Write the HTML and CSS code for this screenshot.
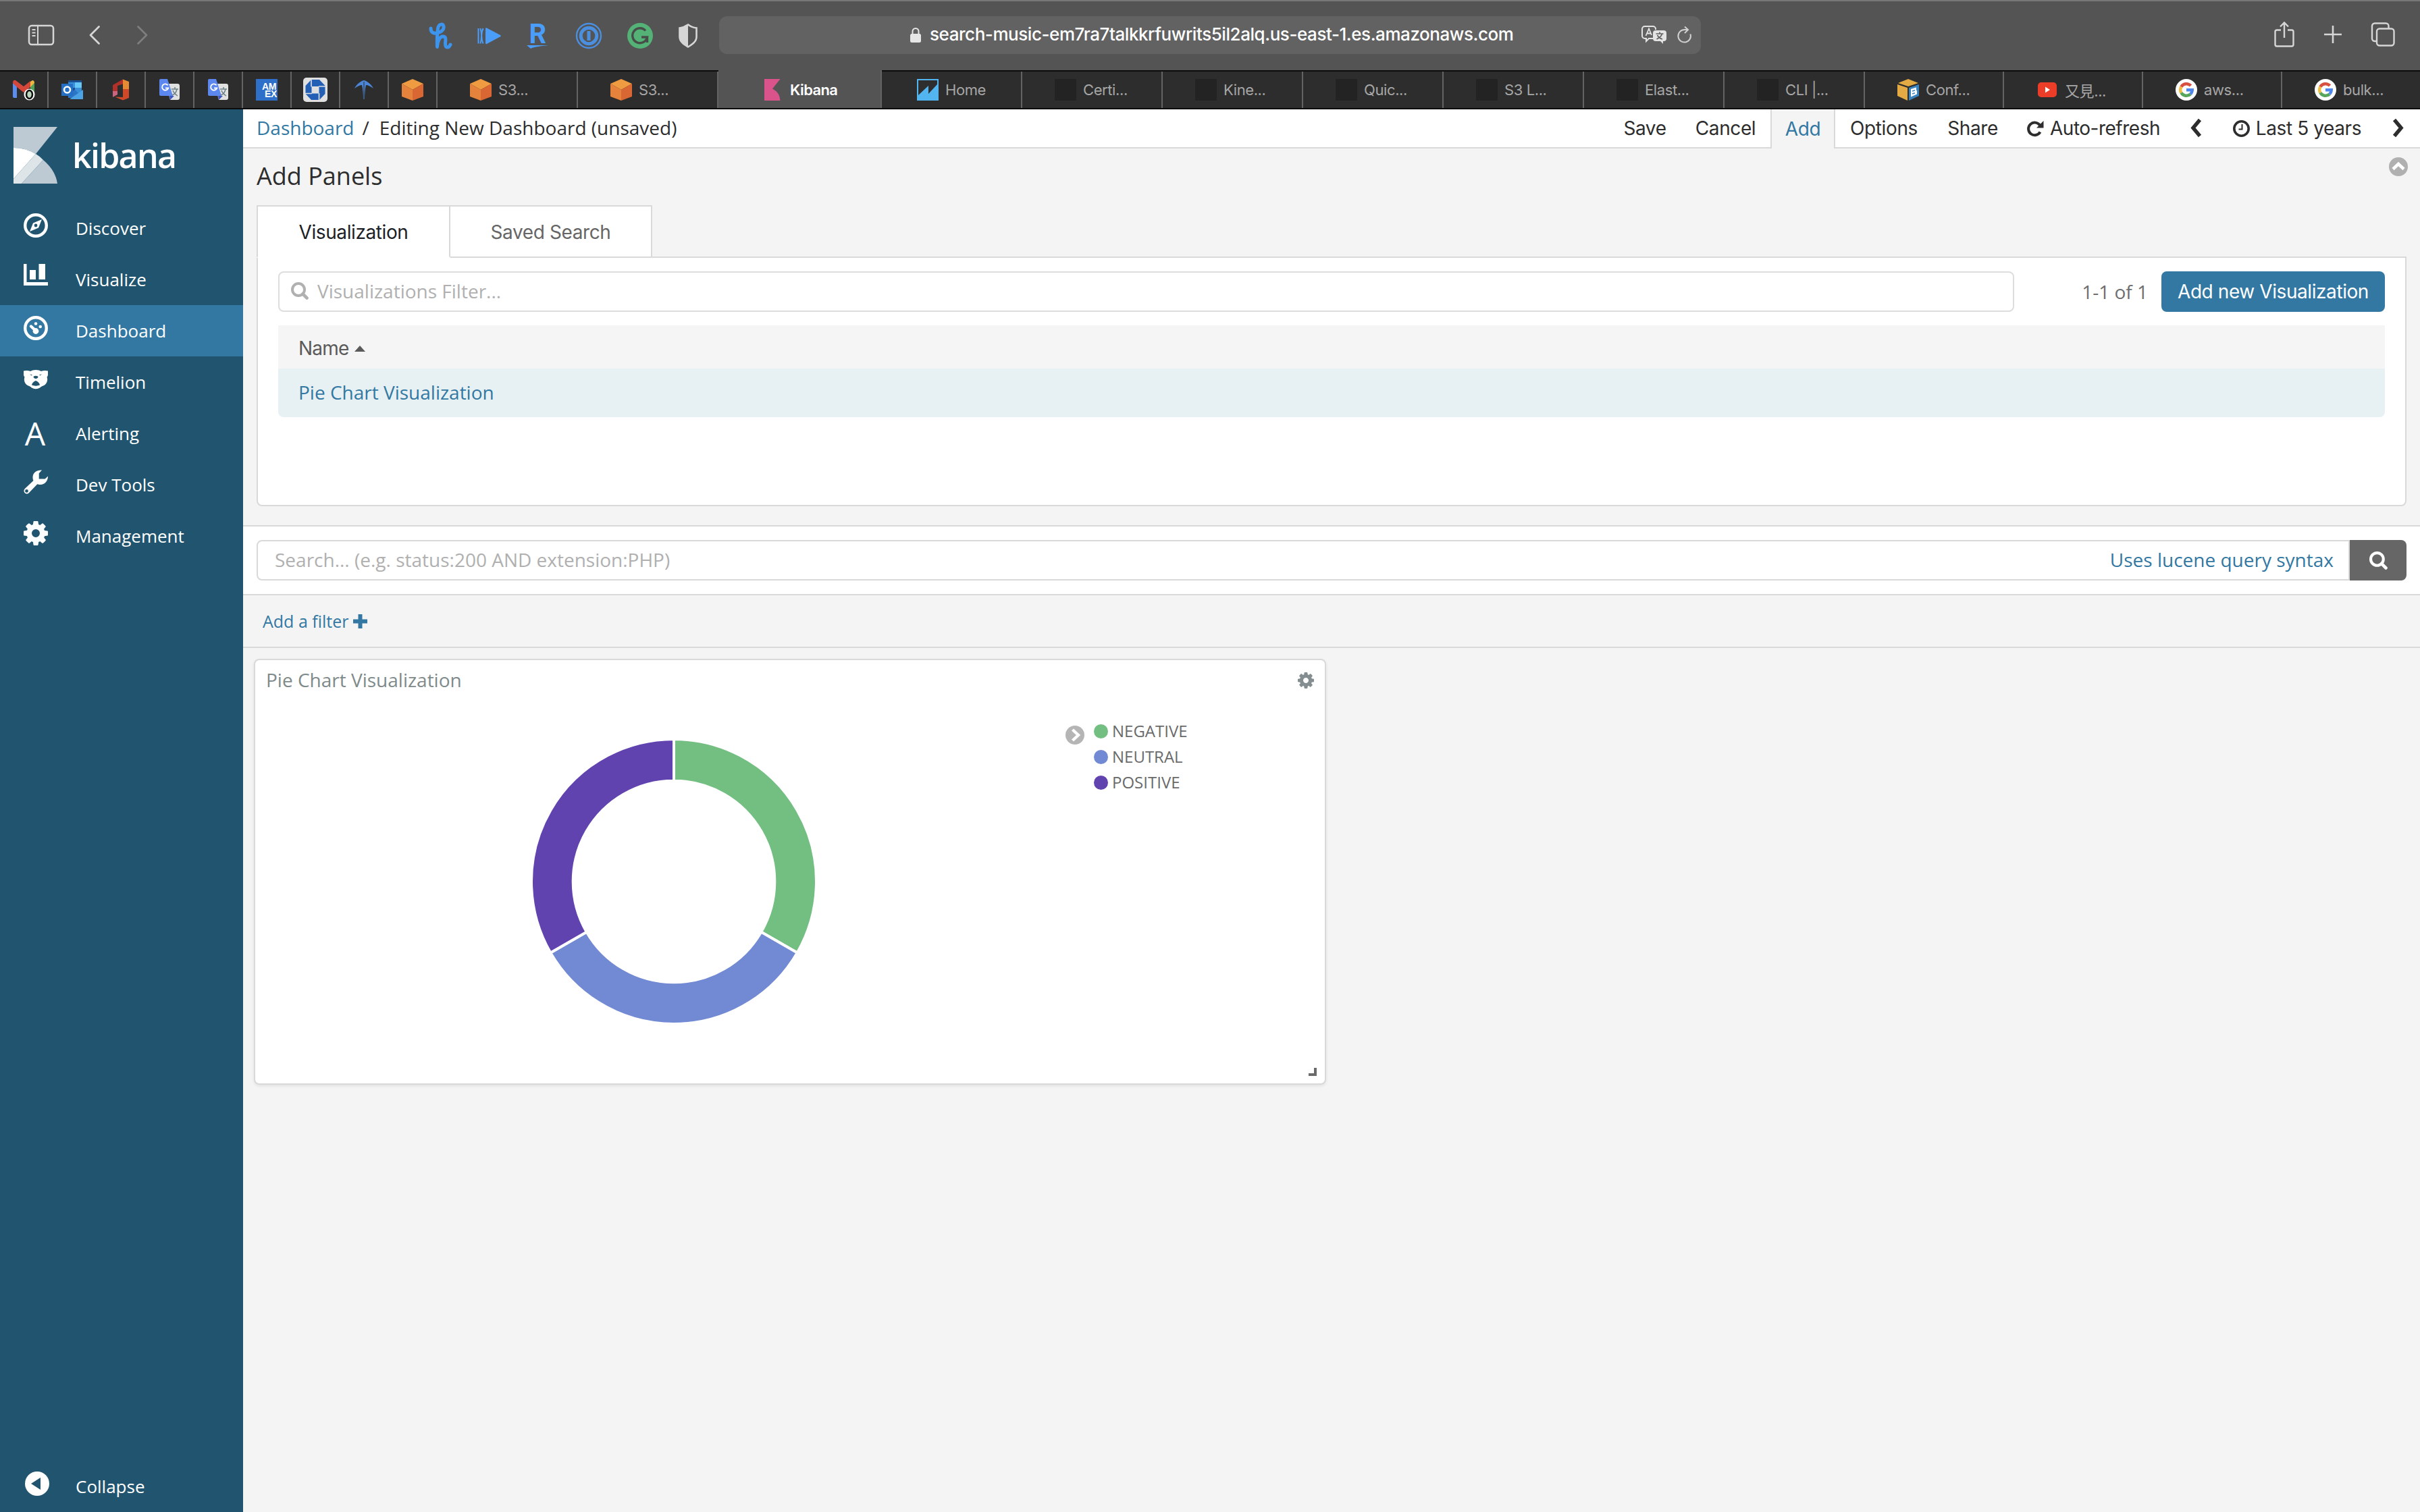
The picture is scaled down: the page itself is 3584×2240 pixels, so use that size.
FILE: index.html
```html
<!DOCTYPE html>
<html lang="en">
<head>
<meta charset="utf-8">
<title>Kibana</title>
<link rel="stylesheet" href="styles.css">
</head>
<body>
<svg class="defs" width="0" height="0">
  <symbol id="cube" viewBox="0 0 32 32"><path fill="#ee9b42" d="M16 0l16 7-16 9L0 7z"/><path fill="#e5833c" d="M0 7l16 9v16L0 26z"/><path fill="#d96733" d="M32 7l-16 9v16l16-6z"/></symbol>
  <symbol id="blank" viewBox="0 0 32 32"><path fill="#232323" d="M0 0h32v32H0z"/></symbol>
  <symbol id="translate" viewBox="0 0 32 32"><path fill="#e1e1e1" d="M11 7h17a3 3 0 013 3v18a3 3 0 01-3 3H17z"/><path fill="#3a56c5" d="M16 25h7l-6 6z"/><path fill="#5b87ee" d="M3 0h10l8 25H3a2 2 0 01-2-2V2a2 2 0 012-2z"/><path d="M13.600 9.300a4.700 4.700 0 10.700 4.200H10" fill="none" stroke="#fff" stroke-width="1.900"/><path d="M19 15h10M24 12v3M27 15c-1 5-4 8-7 9M21 17c1 3 4 6 7 8" fill="none" stroke="#6d8288" stroke-width="1.500"/></symbol>
  <symbol id="google" viewBox="0 0 32 32"><circle cx="16" cy="16" r="16" fill="#fff"/><g fill="none" stroke-width="4.500"><path stroke="#d8503f" d="M8.400 11.600A8.800 8.800 0 0122.500 10"/><path stroke="#f2bd42" d="M8.400 20.400a8.800 8.800 0 010-8.800"/><path stroke="#58a55c" d="M22 22.500a8.800 8.800 0 01-13.600-2.100"/><path stroke="#4f86ec" d="M16 16.300h8.700a8.800 8.800 0 01-2.700 6.200"/></g></symbol>
  <symbol id="gear" viewBox="128 128 1536 1536"><path d="M1152 896q0-106-75-181t-181-75-181 75-75 181 75 181 181 75 181-75 75-181zm512-109v222q0 12-8 23t-20 13l-185 28q-19 54-39 91 35 50 107 138 10 12 10 25t-9 23q-27 37-99 108t-94 71q-12 0-26-9l-138-108q-44 23-91 38-16 136-29 186-7 28-36 28h-222q-14 0-24.500-8.500t-11.500-21.500l-28-184q-49-16-90-37l-141 107q-10 9-25 9-14 0-25-11-126-114-165-168-7-10-7-23 0-12 8-23 15-21 51-66.500t54-70.500q-27-50-41-99l-183-27q-13-2-21-12.500t-8-23.500v-222q0-12 8-23t19-13l186-28q14-46 39-92-40-57-107-138-10-12-10-24 0-10 9-23 26-36 98.500-107.500t94.500-71.500q13 0 26 10l138 107q44-23 91-38 16-136 29-186 7-28 36-28h222q14 0 24.500 8.500t11.500 21.500l28 184q49 16 90 37l142-107q9-9 24-9 13 0 25 10 129 119 165 170 7 8 7 22 0 12-8 23-15 21-51 66.500t-54 70.500q26 50 41 98l183 28q13 2 21 12.500t8 23.500z"/></symbol>
  <symbol id="magnifier" viewBox="0 0 26 26"><circle cx="11" cy="11" r="9" fill="none" stroke="currentColor" stroke-width="4"/><path d="M17.500 17.500l6 6" stroke="currentColor" stroke-width="4.600" stroke-linecap="round"/></symbol>
</svg>

<header class="toolbar">
  <div class="tools tools-left">
    <svg width="40" height="32" viewBox="0 0 40 32"><rect x="2" y="2" width="36" height="28" rx="4" fill="none" stroke="#d6d6d6" stroke-width="2.500"/><path d="M15 2v28" stroke="#d6d6d6" stroke-width="2"/><path d="M6.500 8h5M6.500 12.500h5M6.500 17h5" stroke="#d6d6d6" stroke-width="2"/></svg>
    <svg class="t-back" width="18" height="30" viewBox="0 0 18 30"><path d="M15.500 2.500L3 15l12.500 12.500" fill="none" stroke="#d6d6d6" stroke-width="2.800" stroke-linecap="round" stroke-linejoin="round"/></svg>
    <svg class="t-fwd" width="18" height="30" viewBox="0 0 18 30"><path d="M2.500 2.500L15 15 2.500 27.500" fill="none" stroke="#7e7e7e" stroke-width="2.800" stroke-linecap="round" stroke-linejoin="round"/></svg>
  </div>
  <div class="tools tools-ext">
    <svg width="36" height="40" viewBox="0 0 36 40"><path d="M3 9c0 6 4 8 9 7 7-1 11-6 10-10-1-4-6-4-8 1-1 4-2 12-1.500 29.500C13 28 16 21 21 21c7 0 2 9 4 14 1 3 5 3 7-2" fill="none" stroke="#3c94ee" stroke-width="5" stroke-linecap="round" stroke-linejoin="round"/></svg>
    <svg width="36" height="40" viewBox="0 0 36 40"><path d="M12 9.500c0-1 1-1.500 2-1l20 10.500c1 .6 1 1.600 0 2.200L14 32c-1 .5-2 0-2-1z" fill="#4a9df8"/><path d="M1.500 9v22.500M8.500 9c-3 7-3 15 0 22.500M4.500 9c2 7 2 15 0 22.500" fill="none" stroke="#4a9df8" stroke-width="2"/></svg>
    <svg class="rakuten-icon" width="36" height="40" viewBox="0 0 36 40"><text x="4.500" y="31" class="rakuten">R</text><path d="M1 34h32c-8 1-22 2.500-26 5z" fill="#4a9df8"/></svg>
    <svg width="40" height="40" viewBox="0 0 40 40"><circle cx="20" cy="20" r="18" fill="none" stroke="#4a8fe0" stroke-width="2.400"/><circle cx="20" cy="20" r="11.800" fill="none" stroke="#4a8fe0" stroke-width="5"/><path d="M20 13v14" stroke="#4a8fe0" stroke-width="5"/></svg>
    <svg width="40" height="40" viewBox="0 0 40 40"><circle cx="20" cy="20" r="19" fill="#55b276"/><path d="M28 12.500a11 11 0 10 2.500 9.500H22M30.500 22v8" fill="none" stroke="#474d49" stroke-width="3.400"/></svg>
    <svg width="30" height="36" viewBox="0 0 30 36"><path d="M15 1.500c4 3 8 4.500 12.500 5v13c0 7-6 11-12.500 15C8.500 30.500 2.500 26.500 2.500 19.500v-13C7 6 11 4.500 15 1.500z" fill="none" stroke="#d6d6d6" stroke-width="2.600"/><path d="M15 1.500v33C8.500 30.500 2.500 26.500 2.500 19.500v-13C7 6 11 4.500 15 1.500z" fill="#d6d6d6"/></svg>
  </div>
  <div class="url">
    <svg width="18" height="24" viewBox="0 0 18 24"><rect x="1" y="10" width="16" height="13" rx="2.500" fill="#e6e6e6"/><path d="M4.500 11V6.500a4.500 4.500 0 019 0V11" fill="none" stroke="#e6e6e6" stroke-width="2"/></svg>
    <span class="url-text">search-music-em7ra7talkkrfuwrits5il2alq.us-east-1.es.amazonaws.com</span>
    <svg width="38" height="28" viewBox="0 0 38 28"><path d="M17 19H11l-4 4v-4H5a4 4 0 01-4-4V5a4 4 0 014-4h12a4 4 0 014 4v1" fill="none" stroke="#e3e3e3" stroke-width="2"/><path d="M6.500 15L11 4.500 15 14M8 11.500h6" fill="none" stroke="#e3e3e3" stroke-width="1.800"/><path d="M21 7h12a4 4 0 014 4v8a4 4 0 01-4 4h-1v4l-4-4h-7a4 4 0 01-4-4v-8a4 4 0 014-4z" fill="#e3e3e3"/><path d="M21.500 12h11M27 9.500V12M30.500 12c-1 4-4 6-8 8M23.500 14c1.500 3 4 5 7.500 6" fill="none" stroke="#626262" stroke-width="1.700"/></svg>
    <svg class="reload" width="24" height="28" viewBox="0 0 24 28"><path d="M20.500 12.500A9.300 9.300 0 1112 6H17M12 1.500L17 6l-5 5" fill="none" stroke="#d0d0d0" stroke-width="2"/></svg>
  </div>
  <div class="tools tools-right">
    <svg width="32" height="40" viewBox="0 0 32 40"><path d="M11 13.500H5a2.500 2.500 0 00-2.500 2.500v19A2.500 2.500 0 005 37.500h22a2.500 2.500 0 002.500-2.500V16a2.500 2.500 0 00-2.500-2.500h-6M16 25V3M10 8.500L16 2.500l6 6" fill="none" stroke="#d6d6d6" stroke-width="2.400"/></svg>
    <svg width="28" height="28" viewBox="0 0 28 28"><path d="M14 1v26M1 14h26" stroke="#d6d6d6" stroke-width="2.600"/></svg>
    <svg width="36" height="36" viewBox="0 0 36 36"><path d="M9 28H6a4 4 0 01-4-4V5.500a4 4 0 014-4h16.500a4 4 0 014 4V9" fill="none" stroke="#d6d6d6" stroke-width="2.400"/><rect x="9" y="9.500" width="25.500" height="25" rx="4" fill="none" stroke="#d6d6d6" stroke-width="2.400"/></svg>
  </div>
</header>

<nav class="tabs">
  <div class="tab pin"><svg width="36" height="36" viewBox="0 0 36 36"><path fill="#5a8dee" d="M2 8l6 5v17H4a2 2 0 01-2-2z"/><path fill="#4fa25a" d="M28 13l6-5v20a2 2 0 01-2 2h-4z"/><path fill="#e9b83d" d="M28 6l3-2q3 0 3 4l-6 6z"/><path fill="#d6473b" d="M2 8q0-5 4-4l12 9 10-8v9l-10 8L8 14z"/><ellipse cx="26.500" cy="25" rx="6" ry="6.500" fill="#ccc" stroke="#fff" stroke-width="4"/><ellipse cx="26.500" cy="25" rx="4.500" ry="6" fill="#bcd8bf" stroke="#111" stroke-width="2.600"/></svg></div>
  <div class="tab pin"><svg width="36" height="32" viewBox="0 0 36 32"><path fill="#1a4f94" d="M12 2h20v24H12z"/><path fill="#3a8fd8" d="M12 5h10v8H12zM22 13h10v8H22z"/><path fill="#66c7f7" d="M22 5h10v8H22z"/><path fill="#2b75c4" d="M12 21l10-5 12 12H12z"/><path fill="#4ca3e3" d="M34 16v14H14z"/><path fill="#2370c5" d="M2 7h17v18H2z"/><circle cx="10.500" cy="16" r="4.500" fill="none" stroke="#fff" stroke-width="2.600"/></svg></div>
  <div class="tab pin"><svg width="26" height="32" viewBox="0 0 26 32"><path fill="#b0312a" d="M1 9l15-8.500v7L8 10v13l-7 3z"/><path fill="#c9657e" d="M1 18l7 0v5l-7 4z"/><path fill="#e68a35" d="M16 .5L25 4v12h-9z"/><path fill="#cf4827" d="M16 15h9v13l-9 3.500L4 26.500l12 .5z"/></svg></div>
  <div class="tab pin"><svg width="32" height="32"><use href="#translate"/></svg></div>
  <div class="tab pin"><svg width="32" height="32"><use href="#translate"/></svg></div>
  <div class="tab pin"><svg width="32" height="32" viewBox="0 0 32 32"><path fill="#2e6fc9" d="M0 0h32v32H0z"/><text class="amex" x="9" y="16">AM</text><text class="amex" x="13" y="27">EX</text></svg></div>
  <div class="tab pin"><svg width="36" height="36" viewBox="0 0 36 36"><rect width="36" height="36" rx="5" fill="#e0e0e0"/><path fill="#235fb5" d="M12 3h12l8.500 9v12L24 33H12l-8.500-9V12z"/><path fill="#e0e0e0" d="M12.500 13h11v10.500h-11z"/><path d="M12 2v11.500M23 13h11M23.500 23v11M2 23.500h11" stroke="#e0e0e0" stroke-width="1.600"/></svg></div>
  <div class="tab pin"><svg width="30" height="30" viewBox="0 0 30 30"><path d="M15 1c-5 1-11 6-14 12 4-3 8-5 11-5 1.500 6 2 14 2 21h2c0-7 .5-15 2-21 3 0 7 2 11 5C26 7 20 2 15 1z" fill="#4c86d8"/><path d="M15 3v26" stroke="#2d2d2d"/></svg></div>
  <div class="tab pin"><svg width="32" height="32"><use href="#cube"/></svg></div>
  <div class="tab"><svg width="32" height="32"><use href="#cube"/></svg><span>S3...</span></div>
  <div class="tab"><svg width="32" height="32"><use href="#cube"/></svg><span>S3...</span></div>
  <div class="tab active"><svg width="32" height="32" viewBox="0 0 32 32"><path fill="#da548b" d="M4 0h23.500L16 14.500Q27 20 27.500 32H4z"/></svg><span>Kibana</span></div>
  <div class="tab home"><svg width="32" height="32" viewBox="0 0 32 32"><path fill="#53b5ef" d="M0 0h32v32H0z"/><path fill="#2e2e2e" d="M2 2h28v6L17 22V10L2 24z"/></svg><span>Home</span></div>
  <div class="tab"><svg width="32" height="32"><use href="#blank"/></svg><span>Certi...</span></div>
  <div class="tab"><svg width="32" height="32"><use href="#blank"/></svg><span>Kine...</span></div>
  <div class="tab"><svg width="32" height="32"><use href="#blank"/></svg><span>Quic...</span></div>
  <div class="tab"><svg width="32" height="32"><use href="#blank"/></svg><span>S3 L...</span></div>
  <div class="tab"><svg width="32" height="32"><use href="#blank"/></svg><span>Elast...</span></div>
  <div class="tab"><svg width="32" height="32"><use href="#blank"/></svg><span>CLI |...</span></div>
  <div class="tab last"><svg width="32" height="32" viewBox="0 0 32 32"><path fill="#e4ab45" d="M16 0l15 6-15 5L1 6zM0 8l15 5v19L0 25z"/><path fill="#3a83bd" d="M17 13l15-5v17l-15 7z"/><path d="M20 15l8-2.500v4l1 1v5l-9 4z" fill="#fff"/><path d="M22 18l4-1.200M22 22l4-1.200" stroke="#3a83bd" stroke-width="1.500"/></svg><span>Conf...</span></div>
  <div class="tab last"><svg width="32" height="32" viewBox="0 0 32 32"><rect x="2" y="5" width="28" height="22" rx="5" fill="#eb3d27"/><path d="M13 11.500v9l7-4.500z" fill="#fff"/></svg><span>又見...</span></div>
  <div class="tab last"><svg width="32" height="32"><use href="#google"/></svg><span>aws...</span></div>
  <div class="tab last"><svg width="32" height="32"><use href="#google"/></svg><span>bulk...</span></div>
</nav>

<div class="app">
  <aside class="sidebar">
    <div class="brand">
      <svg width="65" height="84" viewBox="0 0 65 84"><path fill="#bdcad3" d="M0 0h65L33 40Q18 31 0 31z"/><path fill="#fff" d="M0 31Q18 31 33 40L0 77z"/><path fill="#dde5e8" d="M33 40Q39 43.500 44 49L12 84H0v-7z"/><path fill="#bdcad3" d="M44 49Q62 64 65 84H12z"/></svg>
      <span class="brand-name">kibana</span>
    </div>
    <a class="nav-item"><svg width="36" height="36" viewBox="0 0 36 36"><circle cx="18" cy="18" r="15.800" fill="none" stroke="#fff" stroke-width="4.400"/><path fill="#fff" fill-rule="evenodd" d="M27 9l-5 12.500L9 27l5-12.500zM18 15.600a2.400 2.400 0 100 4.800 2.400 2.400 0 000-4.800z"/></svg><span>Discover</span></a>
    <a class="nav-item"><svg class="bars" width="36" height="32" viewBox="0 0 36 32"><path fill="#fff" d="M0 0h4.500v27H36v5H0zM9 9h9v14H9zM22.500 0H32v23h-9.500z"/></svg><span>Visualize</span></a>
    <a class="nav-item current"><svg width="36" height="36" viewBox="0 0 36 36"><circle cx="18" cy="18" r="15.800" fill="none" stroke="#fff" stroke-width="4.400"/><path d="M11 15.500l7 6.500" stroke="#fff" stroke-width="4.400" stroke-linecap="round"/><circle cx="18" cy="22.500" r="4.400" fill="#fff"/><circle cx="18" cy="11.500" r="2.300" fill="#fff"/><circle cx="24.700" cy="16" r="2.300" fill="#fff"/></svg><span>Dashboard</span></a>
    <a class="nav-item"><svg width="36" height="30" viewBox="0 0 36 30"><path fill="#fff" fill-rule="evenodd" d="M18 1c3 0 6 .8 8 2 3-1 7-1.500 10-.5.500 4 0 8-1.500 9 1.500 4 .5 9-3.500 12-3 1.500-5 2-7 4q-6 3.500-12 0c-2-2-4-2.500-7-4-4-3-5-8-3.500-12C0 10.500-.5 6.500 0 2.500 3 1.500 7 2 10 3c2-1.200 5-2 8-2zM9 7.500l2.500 1.700 1.500-1zM27 7.500l-2.500 1.700-1.500-1zM18 9.800c-2 0-3.500.8-3.500 1.600 0 1 2 2.500 3.500 2.500s3.500-1.500 3.500-2.500c0-.8-1.500-1.600-3.500-1.600zM18 17c-3 1-5.500 3.500-6 6.500 4 1.500 8 1.500 12 0-.5-3-3-5.500-6-6.500z"/></svg><span>Timelion</span></a>
    <a class="nav-item"><span class="letter">A</span><span>Alerting</span></a>
    <a class="nav-item"><svg width="36" height="36" viewBox="0 0 36 36"><path fill="#fff" fill-rule="evenodd" d="M27 .5l-4.300 4.700v8.300h9L36 9.500C36 17 31 22 25 22c-2 0-3.500-.3-4.700-.8L8 34c-2 2-4.500 2-6.300.3C0 32.500 0 30 1.800 28L14.500 16c-.7-1.300-1-3-1-5C13.500 4 20 0 27 .5zM4.500 29a2.400 2.400 0 100 4.800 2.400 2.400 0 000-4.800z"/></svg><span>Dev Tools</span></a>
    <a class="nav-item"><svg width="36" height="36" fill="#fff"><use href="#gear"/></svg><span>Management</span></a>
    <a class="nav-item collapse"><svg width="36" height="36" viewBox="0 0 36 36"><circle cx="18" cy="18" r="18" fill="#fff"/><path d="M23 9v18L9 18z" fill="#21556f"/></svg><span>Collapse</span></a>
  </aside>

  <main class="main">
    <div class="topnav">
      <div class="crumbs"><a class="link">Dashboard</a><span class="slash">/</span><span>Editing New Dashboard (unsaved)</span></div>
      <div class="menu">
        <a class="mi w-save">Save</a>
        <a class="mi w-cancel">Cancel</a>
        <a class="mi w-add">Add</a>
        <a class="mi w-options">Options</a>
        <a class="mi w-share">Share</a>
        <a class="mi w-auto"><svg width="25" height="25" viewBox="0 0 25 25"><path d="M19.500 17.500a9.300 9.300 0 11-.5-10" fill="none" stroke="#2d2d2d" stroke-width="4"/><path d="M24.500 1v10.500H14z" fill="#2d2d2d"/></svg><span>Auto-refresh</span></a>
        <a class="mi w-prev"><svg width="17" height="29" viewBox="0 0 17 29"><path d="M14 2.500L4 14.500l10 12" fill="none" stroke="#2d2d2d" stroke-width="5.500"/></svg></a>
        <a class="mi w-time"><svg width="25" height="25" viewBox="0 0 25 25"><circle cx="12.500" cy="12.500" r="10.700" fill="none" stroke="#2d2d2d" stroke-width="3.600"/><path d="M13.500 6v7.500H8.500" fill="none" stroke="#2d2d2d" stroke-width="2"/></svg><span>Last 5 years</span></a>
        <a class="mi w-next"><svg width="17" height="29" viewBox="0 0 17 29"><path d="M3 2.500l10 12-10 12" fill="none" stroke="#2d2d2d" stroke-width="5.500"/></svg></a>
      </div>
    </div>

    <section class="add">
      <div class="add-head"><h2 class="add-title">Add Panels</h2>
        <svg width="28" height="28" viewBox="0 0 28 28"><circle cx="14" cy="14" r="14" fill="#b0b0b0"/><path d="M6 17.500l8-7.500 8 7.500" fill="none" stroke="#fff" stroke-width="4.600"/></svg></div>
      <div class="ptabs"><a class="ptab on">Visualization</a><a class="ptab">Saved Search</a></div>
      <div class="picker">
        <div class="picker-bar">
          <div class="filter"><svg width="28" height="26" viewBox="0 0 26 26"><use href="#magnifier"/></svg><span>Visualizations Filter...</span></div>
          <span class="count">1-1 of 1</span>
          <a class="btn">Add new Visualization</a>
        </div>
        <div class="th"><span>Name</span><svg width="16" height="9" viewBox="0 0 16 9"><path d="M8 0l8 9H0z" fill="#5a5a5a"/></svg></div>
        <div class="td"><a class="link">Pie Chart Visualization</a></div>
      </div>
    </section>

    <section class="query">
      <div class="query-input"><span class="placeholder">Search... (e.g. status:200 AND extension:PHP)</span><a class="link">Uses lucene query syntax</a></div>
      <a class="query-btn"><svg width="27" height="27" viewBox="0 0 26 26"><use href="#magnifier"/></svg></a>
    </section>
    <div class="filters"><a class="link">Add a filter</a><svg width="21" height="21" viewBox="0 0 21 21"><path d="M10.500 0v21M0 10.500h21" stroke="#3278a2" stroke-width="6"/></svg></div>

    <section class="panel">
      <div class="panel-head"><span>Pie Chart Visualization</span><svg width="24" height="24" fill="#848e91"><use href="#gear"/></svg></div>
      <div class="panel-body">
        <svg class="donut" width="424" height="424" viewBox="-212 -212 424 424"><g stroke="#fff" stroke-width="4">
          <path fill="#73bf82" d="M0-211A211 211 0 01182.730 105.500L129.300 74.650A149.300 149.300 0 000-149.300z"/>
          <path fill="#7289d3" d="M182.730 105.500A211 211 0 01-182.730 105.500L-129.300 74.650A149.300 149.300 0 00129.300 74.650z"/>
          <path fill="#6143b0" d="M-182.730 105.500A211 211 0 010-211V-149.300A149.300 149.300 0 00-129.300 74.650z"/></g></svg>
        <svg class="legend-toggle" width="28" height="28" viewBox="0 0 28 28"><circle cx="14" cy="14" r="14" fill="#b5b5b5"/><path d="M10.500 6l8.500 8-8.500 8" fill="none" stroke="#fff" stroke-width="4.400"/></svg>
        <ul class="legend">
          <li><i class="dot neg"></i><span>NEGATIVE</span></li>
          <li><i class="dot neu"></i><span>NEUTRAL</span></li>
          <li><i class="dot pos"></i><span>POSITIVE</span></li>
        </ul>
      </div>
      <i class="grip"></i>
    </section>
  </main>
</div>
</body>
</html>
```
FILE: styles.css
```css
* { box-sizing: border-box; }
body { margin: 0; width: 3584px; height: 2240px; overflow: hidden; display: flex; flex-direction: column; font-family: "Open Sans", sans-serif; font-size: 28px; color: #2d2d2d; background: #f4f4f4; }
svg { display: block; flex: none; }
span, a { white-space: nowrap; }
.defs { position: absolute; }

.toolbar { height: 104px; flex: none; display: flex; align-items: center; background: #545454; border-top: 2px solid #777; }
.tools { display: flex; align-items: center; padding-bottom: 3px; }
.tools-left { width: 635px; padding-left: 41px; }
.t-back { margin-left: 50px; }
.t-fwd { margin-left: 53px; }
.tools-ext { width: 430px; gap: 36.2px; padding-bottom: 1px; }
.rakuten-icon { overflow: visible; }
.rakuten { font: 700 40px Roboto, sans-serif; fill: #4a9df8; }
.url { width: 1454px; height: 56px; border-radius: 12px; background: #626262; display: flex; align-items: center; padding-left: 282px; margin-bottom: 2px; }
.url-text { font: 500 26px Inter, sans-serif; color: #fff; letter-spacing: -.44px; margin-left: 12px; padding-bottom: 3px; width: 1054px; }
.reload { margin-left: 14px; }
.tools-right { padding-left: 848px; gap: 42px; padding-bottom: 4px; }

.tabs { height: 58px; flex: none; display: flex; background: #2d2d2d; border-top: 2px solid #0c0c0c; border-bottom: 2px solid #0c0c0c; }
.tab { width: 208px; flex: none; display: flex; align-items: center; gap: 10px; padding-left: 48px; border-right: 2px solid #646464; font: 22px Inter, "Noto Sans CJK TC", sans-serif; letter-spacing: -.4px; color: #a6a6a6; }
.tab.pin { width: 72px; padding: 0; justify-content: center; }
.tab.active { width: 242px; padding-left: 64px; background: #545454; color: #fff; font-weight: 600; letter-spacing: -.65px; margin-top: -2px; padding-top: 2px; }
.tab.home { padding-left: 52px; }
.tab.last { width: 206px; }
.tab:last-child { border-right: 0; }
.amex { font: 700 14px "Liberation Sans", sans-serif; fill: #fff; letter-spacing: -.3px; }

.app { flex: 1; display: flex; min-height: 0; }
.sidebar { width: 360px; flex: none; display: flex; flex-direction: column; background: #21556f; }
.brand { height: 138px; flex: none; display: flex; align-items: center; padding: 0 0 2px 20px; gap: 22px; }
.brand-name { font-size: 50px; font-weight: 600; color: #fff; letter-spacing: -1.7px; }
.nav-item { height: 76px; flex: none; display: flex; align-items: center; padding-left: 35px; gap: 41px; font-size: 26px; color: #fff; }
.nav-item svg { margin-top: -8px; }
.nav-item .bars { margin-top: -14px; }
.nav-item.current { background: #3278a2; }
.letter { width: 36px; font-size: 48px; line-height: 76px; text-align: center; margin-left: -1px; margin-right: 1px; }
.collapse { margin-top: auto; padding-left: 37px; gap: 39px; }

.main { flex: 1; min-width: 0; }
.link { color: #3278a2; }
.topnav { height: 58px; display: flex; justify-content: space-between; background: #fff; border-bottom: 2px solid #d9d9d9; }
.crumbs { display: flex; align-items: center; padding: 0 0 2px 20px; }
.slash { padding: 0 15px 0 12px; }
.menu { display: flex; font-family: Inter, sans-serif; letter-spacing: -.4px; }
.mi { display: flex; align-items: center; justify-content: center; gap: 9px; height: 56px; }
.w-save { width: 106px; padding-left: 2px; }
.w-cancel { width: 134px; padding-left: 1px; }
.w-add { width: 96px; height: 58px; color: #3278a2; background: #f4f4f4; border: 2px solid #d9d9d9; border-width: 0 2px; }
.w-options { width: 144px; }
.w-share { width: 119px; }
.w-auto { width: 239px; letter-spacing: -.5px; }
.w-prev { width: 64px; padding-bottom: 2px; }
.w-time { width: 235px; padding-left: 1px; }
.w-next { width: 65px; padding-bottom: 2px; }

.add { height: 560px; padding: 0 20px; border-bottom: 2px solid #d9d9d9; }
.add-head { height: 84px; display: flex; justify-content: space-between; margin-right: -2px; }
.add-head svg { margin-top: 13px; }
.add-title { margin: 0; font-size: 36px; line-height: 82px; font-weight: 400; }
.ptabs { display: flex; height: 78px; margin-bottom: -2px; position: relative; font-family: Inter, sans-serif; letter-spacing: -.4px; }
.ptab { width: 299px; display: flex; align-items: center; justify-content: center; padding-top: 2px; background: #fff; border: 2px solid #d9d9d9; border-left: 0; color: #666; }
.ptab.on { width: 287px; border-left: 2px solid #d9d9d9; border-bottom-color: #fff; color: #1c1f26; }
.picker { height: 370px; background: #fff; border: 2px solid #d9d9d9; border-radius: 0 0 8px 8px; padding: 20px 30px; }
.picker-bar { height: 60px; display: flex; align-items: center; margin-bottom: 20px; }
.filter { width: 2571px; height: 60px; display: flex; align-items: center; gap: 12px; padding: 0 0 2px 16px; border: 2px solid #ddd; border-radius: 8px; color: #b0b0b0; }
.filter svg { margin-top: -1px; }
.count { margin-left: auto; margin-right: 20px; color: #6e6e6e; }
.btn { width: 331px; height: 60px; border-radius: 8px; background: #3278a2; color: #fff; display: flex; align-items: center; justify-content: center; font-family: Inter, sans-serif; letter-spacing: -.42px; }
.th { height: 64px; background: #f5f5f5; display: flex; align-items: center; gap: 9px; padding: 4px 0 0 30px; color: #5a5a5a; font-family: Inter, sans-serif; letter-spacing: -.8px; }
.td { height: 72px; background: #e7f0f3; display: flex; align-items: center; padding: 0 0 2px 30px; border-radius: 0 0 8px 8px; }

.query { height: 102px; display: flex; align-items: center; padding: 0 20px; background: #fff; border-bottom: 2px solid #d9d9d9; }
.query-input { flex: 1; height: 60px; display: flex; align-items: center; justify-content: space-between; padding: 0 22px 2px 25px; border: 2px solid #d9d9d9; border-radius: 8px 0 0 8px; }
.placeholder { color: #b0b0b0; }
.query-btn { width: 84px; height: 60px; display: flex; align-items: center; justify-content: center; background: #666; color: #fff; border-radius: 0 8px 8px 0; }
.filters { height: 78px; display: flex; align-items: center; gap: 7px; padding-left: 29px; font-size: 25px; border-bottom: 2px solid #d9d9d9; }

.panel { position: relative; width: 1588px; height: 631px; margin: 16px 0 0 16px; background: #fff; border: 2px solid #d9d9d9; border-radius: 8px; box-shadow: 0 2px 4px rgba(0,0,0,.08); }
.panel-head { height: 58px; display: flex; align-items: center; justify-content: space-between; padding: 0 16px; color: #7f8a8a; }
.panel-head svg { margin-top: 2px; }
.panel-body { display: flex; align-items: flex-start; }
.donut { margin: 58px 0 0 408px; }
.legend-toggle { margin: 39px 14px 0 368px; }
.legend { margin: 27px 0 0; padding: 0; list-style: none; font-size: 24px; color: #6a6a6a; }
.legend li { height: 38px; display: flex; align-items: center; gap: 6px; }
.dot { width: 21px; height: 21px; border-radius: 50%; margin-top: 2px; }
.neg { background: #73bf82; }
.neu { background: #7289d3; }
.pos { background: #6143b0; }
.grip { position: absolute; right: 12px; bottom: 11px; width: 12px; height: 12px; border: solid #6a6a6a; border-width: 0 4px 4px 0; }
```
